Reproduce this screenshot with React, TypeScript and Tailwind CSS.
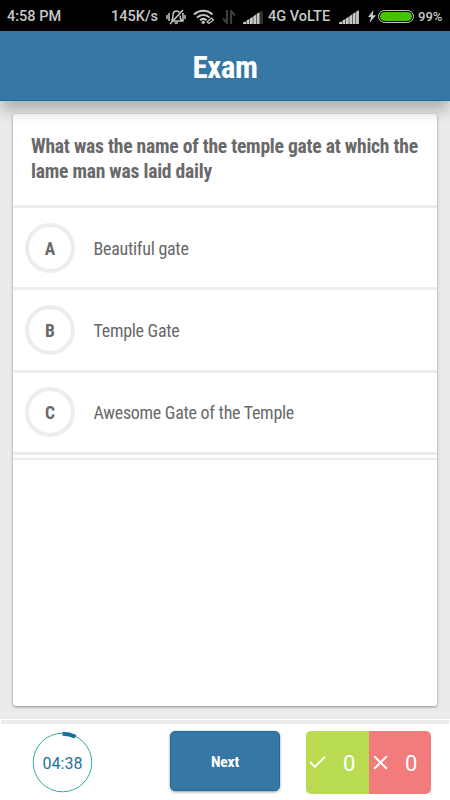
import { Check, X } from 'lucide-react';

interface Option {
  letter: string;
  text: string;
}

const options: Option[] = [
  { letter: 'A', text: 'Beautiful gate' },
  { letter: 'B', text: 'Temple Gate' },
  { letter: 'C', text: 'Awesome Gate of the Temple' },
];

function SignalIcon({ weak = false }: { weak?: boolean }) {
  return (
    <svg className="shrink-0" width="20" height="14" viewBox="0 0 20 14" fill="#c8c8c8">
      <path d="M0 14v-1.500l3-1V14zM3.500 14v-3.500l2.900-1.500V14zM6.900 14V8.500l2.900-1.700V14zM10.300 14V6.200l2.900-1.800V14zM13.700 14V3.800l2.900-1.600V14z" />
      <path d="M17.100 14V1.700L19.900 0v14z" fill={weak ? '#333' : '#c8c8c8'} />
    </svg>
  );
}

function StatusBar() {
  return (
    <div className="flex h-[31px] items-center bg-black pt-0.5 pl-[7px] font-['Roboto',sans-serif] text-[14.5px] font-medium whitespace-nowrap text-[#c8c8c8] font-stretch-normal">
      <span className="w-[104px] shrink-0">4:58 PM</span>
      <span className="w-[55px] shrink-0">145K/s</span>
      {/* Silenced bell */}
      <svg className="mr-[7px] shrink-0" width="20" height="16" viewBox="0 0 20 16" fill="none" stroke="#c8c8c8" strokeWidth="1.500">
        <path d="M1 6v4M3 4v8M17 4v8M19 6v4M5.500 11.500c1.500-1.300 1.500-3 1.500-5C7 3 9 2 10.500 2c1.300 0 2.300.6 3 1.500M14 6.500c0 2.300.3 4 2 5.500H7M8.500 14h3.500M4 15L17 1" />
      </svg>
      <svg className="mr-[7px] shrink-0" width="22" height="16" viewBox="0 0 22 16" fill="none" stroke="#c8c8c8" strokeWidth="2">
        <path d="M1 5.500c5.500-5 13-5 18.500 0M4 8.600c4-3.500 9-3.500 12.500 0M7 11.300c2-1.800 4.500-1.800 6.500 0" />
        <circle cx="10.200" cy="13.300" r="1.600" fill="#c8c8c8" stroke="none" />
        <path d="M14 13l4.500-4 2 2-4.500 3.500z" strokeWidth="1.200" />
      </svg>
      <svg className="mr-[7px] shrink-0" width="14" height="14" viewBox="0 0 14 14" fill="none" stroke="#3c3c3c" strokeWidth="2.200">
        <path d="M5 0v13L1 8.500M9 14V1l4 4.500" />
      </svg>
      <SignalIcon weak />
      <span className="ml-[5px] w-[71px] shrink-0">4G VoLTE</span>
      <SignalIcon />
      <svg className="ml-[9px] shrink-0" width="8" height="13" viewBox="0 0 8 13" fill="#c8c8c8">
        <path d="M5.500 0L0 7h3L1.500 13 8 5.200H4.700z" />
      </svg>
      <div className="ml-[2px] h-[13px] w-[36px] shrink-0 rounded-full border-[1.500px] border-[#c8c8c8] p-px">
        <div className="h-full rounded-full bg-[#43c200]" />
      </div>
      <span className="ml-[4px] text-[13px]">99%</span>
    </div>
  );
}

function Timer() {
  return (
    <div className="relative ml-[32px] flex h-[62px] w-[61px] items-center justify-center">
      <svg className="absolute inset-0" width="61" height="62" viewBox="0 0 61 62" fill="none">
        <circle cx="30.500" cy="31.500" r="29.300" stroke="#36ab9c" strokeWidth="1" />
        <path d="M30.500 2.800a29 29 0 0 1 13 3" stroke="#176ea2" strokeWidth="4" />
      </svg>
      <span className="relative top-[2px] font-['Roboto',sans-serif] text-[16px] leading-none text-[#2270a0] font-stretch-normal">04:38</span>
    </div>
  );
}

export default function App() {
  return (
    <div className="flex h-[800px] w-[450px] flex-col overflow-hidden bg-[#ebebeb] font-['Roboto_Condensed','Roboto',sans-serif] text-[#696969] font-stretch-condensed">
      <StatusBar />
      <header className="relative flex h-[70px] items-center justify-center border-b border-[#1a6d9e] bg-[#3777a4] pt-[3px] shadow-[0_10px_14px_-1px_rgba(0,0,0,0.26)]">
        <h1 className="text-[31px] leading-none font-bold tracking-[-0.5px] text-white">Exam</h1>
      </header>

      <main className="flex h-[618px] flex-col px-[13px] pt-[13px]">
        <section className="flex h-[592px] flex-col rounded-[3px] bg-white shadow-[0_1px_3px_rgba(0,0,0,0.4)]">
          <h2 className="h-[91px] pt-[20px] pl-[18px] text-[19.6px] leading-[25px] font-bold tracking-[-0.24px] whitespace-nowrap">
            What was the name of the temple gate at which the
            <br />
            lame man was laid daily
          </h2>
          {options.map((option) => (
            <div key={option.letter} className="flex h-[82.400px] items-center border-t-3 border-[#ededed] pl-[12px]">
              <div className="flex size-[50px] items-center justify-center rounded-full border-4 border-[#ededed] pt-0.5 text-[17.5px] font-bold">
                {option.letter}
              </div>
              <span className="ml-[18.500px] pt-0.5 text-[18px] leading-none tracking-[-0.28px] whitespace-nowrap">{option.text}</span>
            </div>
          ))}
          <div className="h-[8px] border-t-3 border-b-2 border-[#ebebeb]" />
        </section>
      </main>

      <footer className="flex h-[81px] flex-col bg-white pt-px">
        <div className="mx-px h-[4px] bg-[#ebebeb]" />
        <div className="flex pt-[7px]">
          <Timer />
          <button className="ml-[77px] h-[60px] w-[110px] rounded-[5px] border border-[#1a6d9e] bg-[#3777a4] pt-[3px] text-[15.5px] font-bold tracking-[-0.2px] text-white shadow-[0_1px_3px_rgba(0,0,0,0.4)]">
            Next
          </button>
          <div className="ml-[26px] flex h-[63px] w-[125px] overflow-hidden rounded-[5px] font-['Roboto',sans-serif] text-[22px] text-white font-stretch-normal">
            <div className="flex w-[63px] items-center bg-[#b9db52] pl-px">
              <Check size={21} strokeWidth={2.2} />
              <span className="ml-[15px] pt-0.5">0</span>
            </div>
            <div className="flex w-[62px] items-center bg-[#f27b7c]">
              <X size={23} strokeWidth={2.1} />
              <span className="ml-[13px] pt-0.5">0</span>
            </div>
          </div>
        </div>
      </footer>
    </div>
  );
}
